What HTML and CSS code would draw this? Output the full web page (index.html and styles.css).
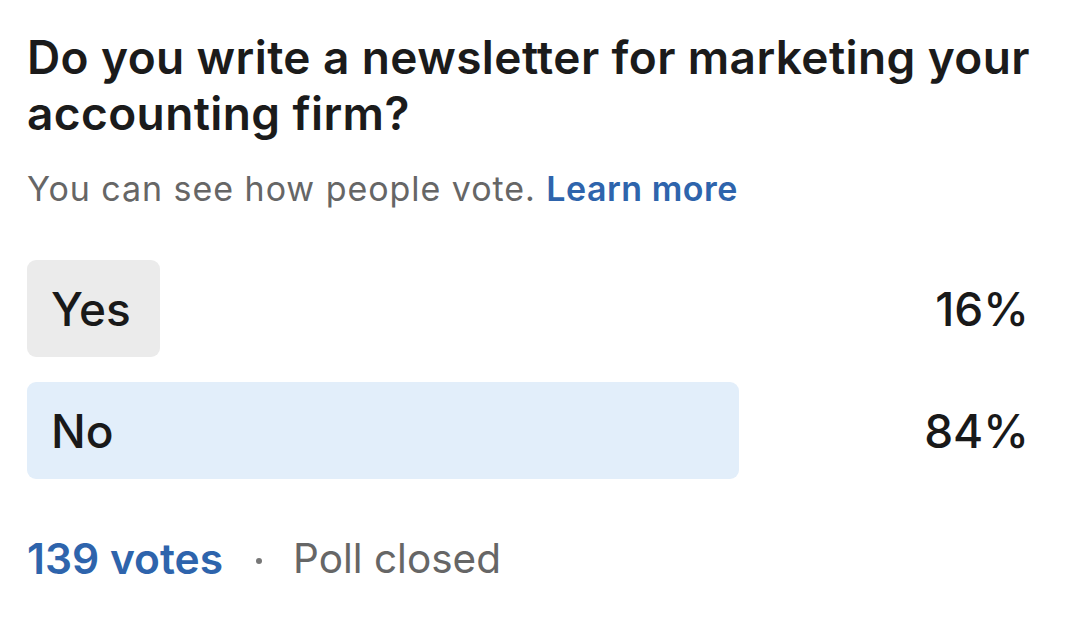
FILE: index.html
```html
<!DOCTYPE html>
<html>
<head>
<meta charset="utf-8">
<link rel="stylesheet" href="styles.css">
</head>
<body>
<div class="poll">
  <h1 class="question">Do you write a newsletter for marketing your accounting firm?</h1>
  <p class="note">You can see how people vote. <a class="link" href="#">Learn more</a></p>
  <div class="options">
    <div class="option">
      <div class="bar bar-gray" style="width: 133px"></div>
      <span class="label">Yes</span>
      <span class="pct">16%</span>
    </div>
    <div class="option">
      <div class="bar bar-blue" style="width: 712px"></div>
      <span class="label">No</span>
      <span class="pct">84%</span>
    </div>
  </div>
  <div class="footer">
    <span class="votes">139 votes</span>
    <span class="dot"></span>
    <span class="status">Poll closed</span>
  </div>
</div>
</body>
</html>
```
FILE: styles.css
```css
html, body {
  margin: 0;
  padding: 0;
  background: #ffffff;
}
body {
  font-family: Inter, "Noto Sans", sans-serif;
  color: #1a1a1a;
}
.poll {
  padding: 29px 30px 0 27px;
}
.question {
  margin: 0;
  font-size: 46px;
  font-weight: 600;
  line-height: 56px;
  letter-spacing: 0.4px;
  color: #1b1b1b;
}
.note {
  margin: 28px 0 0;
  font-size: 34px;
  line-height: 40px;
  letter-spacing: 0.95px;
  color: #666666;
  font-weight: 400;
}
.link {
  color: #2e64ac;
  font-weight: 600;
  text-decoration: none;
  letter-spacing: 0.5px;
}
.options {
  margin: 51px 33px 0 0;
  display: flex;
  flex-direction: column;
  gap: 25px;
}
.option {
  position: relative;
  height: 97px;
  display: flex;
  align-items: center;
  justify-content: space-between;
  padding: 0 0 0 24px;
}
.bar {
  position: absolute;
  left: 0;
  top: 0;
  bottom: 0;
  border-radius: 9px;
}
.bar-gray { background: #ebebeb; }
.bar-blue { background: #e2eefa; }
.label, .pct {
  position: relative;
  font-size: 46px;
  font-weight: 500;
  color: #191919;
}
.footer {
  margin-top: 55px;
  display: flex;
  align-items: center;
  font-size: 40.5px;
  line-height: 50px;
}
.votes {
  color: #2e64ac;
  font-weight: 600;
  font-size: 42.5px;
}
.dot {
  width: 6px;
  height: 6px;
  border-radius: 50%;
  background: #777777;
  margin: 4px 31px 0 33px;
}
.status {
  color: #666666;
}
```
